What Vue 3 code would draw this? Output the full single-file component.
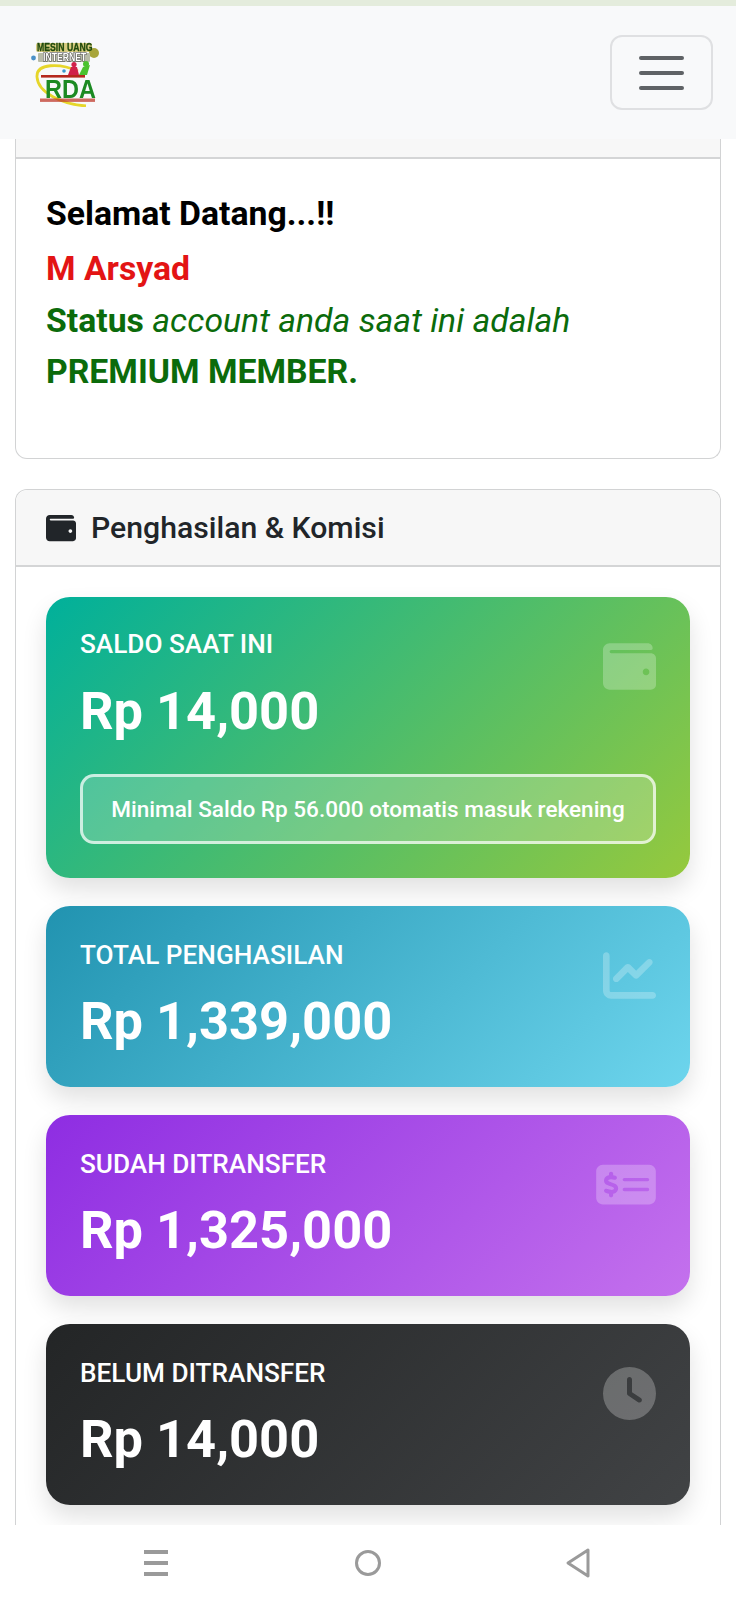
<script setup>
const stats = [
  { key: 'green', label: 'SALDO SAAT INI', value: 'Rp 14,000', icon: 'wallet', note: 'Minimal Saldo Rp 56.000 otomatis masuk rekening' },
  { key: 'blue', label: 'TOTAL PENGHASILAN', value: 'Rp 1,339,000', icon: 'chart' },
  { key: 'purple', label: 'SUDAH DITRANSFER', value: 'Rp 1,325,000', icon: 'money' },
  { key: 'dark', label: 'BELUM DITRANSFER', value: 'Rp 14,000', icon: 'clock' }
]
const wallet = 'M461.2 128H80c-8.84 0-16-7.16-16-16s7.16-16 16-16h384c8.84 0 16-7.16 16-16 0-26.51-21.49-48-48-48H64C28.65 32 0 60.65 0 96v320c0 35.35 28.65 64 64 64h397.2c28.02 0 50.8-21.53 50.8-48V176c0-26.47-22.78-48-50.8-48zM416 340c-17.67 0-32-14.33-32-32s14.33-32 32-32 32 14.33 32 32-14.33 32-32 32z'
const icons = {
  wallet: { box: '0 0 512 512', w: 53, d: wallet },
  chart: { box: '0 0 512 512', w: 53, d: 'M64 64c0-17.7-14.3-32-32-32S0 46.3 0 64V400c0 44.2 35.8 80 80 80H480c17.7 0 32-14.3 32-32s-14.3-32-32-32H80c-8.8 0-16-7.2-16-16V64zm406.6 86.6c12.5-12.5 12.5-32.8 0-45.3s-32.8-12.5-45.3 0L320 210.7l-57.4-57.4c-12.5-12.5-32.8-12.5-45.3 0l-112 112c-12.5 12.5-12.5 32.8 0 45.3s32.8 12.5 45.3 0L240 221.3l57.4 57.4c12.5 12.5 32.8 12.5 45.3 0l128-128z' },
  money: { box: '0 0 576 512', w: 60, d: 'M64 64C28.7 64 0 92.7 0 128V384c0 35.3 28.7 64 64 64H512c35.3 0 64-28.7 64-64V128c0-35.3-28.7-64-64-64H64zM272 192H496c8.8 0 16 7.2 16 16s-7.2 16-16 16H272c-8.8 0-16-7.2-16-16s7.2-16 16-16zM256 304c0-8.8 7.2-16 16-16H496c8.8 0 16 7.2 16 16s-7.2 16-16 16H272c-8.8 0-16-7.2-16-16zM164 152v13.9c7.5 1.2 14.6 2.9 21.1 4.7c10.7 2.8 17 13.8 14.2 24.5s-13.8 17-24.5 14.2c-11-2.9-21.6-5-31.2-5.2c-7.9-.1-16 1.8-21.5 5c-4.8 2.8-6.2 5.6-6.2 9.3c0 1.8 .1 3.5 5.3 6.7c6.3 3.8 15.5 6.7 28.3 10.5l.7 .2c11.2 3.4 25.6 7.7 37.1 15c12.9 8.1 24.3 21.3 24.6 41.6c.3 20.9-10.5 36.1-24.8 45c-7.2 4.5-15.2 7.3-23.2 9V360c0 11-9 20-20 20s-20-9-20-20V345.4c-10.3-2.2-20-5.5-28.2-8.4c-2.1-.7-4.1-1.4-6.1-2.1c-10.5-3.5-16.1-14.8-12.6-25.3s14.8-16.1 25.3-12.6c2.5 .8 4.9 1.7 7.2 2.4c13.6 4.6 24 8.1 35.1 8.5c8.6 .3 16.5-1.6 21.4-4.7c4.1-2.5 6-5.5 5.9-10.5c0-2.9-.8-5-5.9-8.2c-6.3-4-15.4-6.9-28-10.7l-1.7-.5c-10.9-3.3-24.6-7.4-35.6-14c-12.7-7.7-24.6-20.5-24.7-40.7c-.1-21.1 11.8-35.7 25.8-43.9c6.9-4.1 14.5-6.8 22.2-8.5V152c0-11 9-20 20-20s20 9 20 20z' },
  clock: { box: '0 0 512 512', w: 53, d: 'M256 0a256 256 0 1 1 0 512A256 256 0 1 1 256 0zM232 120V256c0 8 4 15.5 10.7 20l96 64c11 7.4 25.9 4.4 33.3-6.7s4.4-25.9-6.7-33.3L280 243.2V120c0-13.3-10.7-24-24-24s-24 10.7-24 24z' }
}
</script>

<template>
  <div class="page">
    <div class="strip"></div>
    <nav class="navbar">
      <svg class="logo" viewBox="30 38 70 68" width="70" height="68" aria-label="Logo RDA">
        <rect x="36" y="42" width="56" height="9" rx="2" fill="#c9b84a" opacity=".7" />
        <circle cx="94" cy="52" r="5" fill="#a8a53a" />
        <circle cx="33.5" cy="57" r="2.4" fill="#4a90c8" />
        <rect x="38" y="52" width="52" height="9" rx="1" fill="#b8bca8" />
        <text transform="translate(37 49.8) scale(1 1.2)" class="t1">MESIN UANG</text>
        <text transform="translate(43 60.2) scale(1 1.2)" class="t2">INTERNET</text>
        <path d="M78 70 C60 62 36 62 37 76 C38 92 62 103 86 105" fill="none" stroke="#e6d62a" stroke-width="2.8" />
        <circle cx="64" cy="70" r="1.8" fill="#3a9ad0" />
        <path d="M68 74 L71 66 L77 66 L79 74Z" fill="#d0214a" />
        <circle cx="74" cy="63.5" r="2.6" fill="#d0214a" />
        <path d="M79 74 L83 66 L90 64 L87 74Z" fill="#4bc22f" />
        <circle cx="86" cy="63" r="3" fill="#4bc22f" />
        <rect x="41" y="74" width="44" height="2.6" fill="#b5281e" />
        <text transform="translate(45 97) scale(1 1.1)" class="t3">RDA</text>
        <rect x="40" y="97.5" width="55" height="3.4" fill="#c0392b" opacity=".75" />
      </svg>
      <button class="toggler" aria-label="Menu"><span></span><span></span><span></span></button>
    </nav>

    <main class="content">
      <section class="card welcome">
        <div class="card-head stub"></div>
        <div class="welcome-body">
          <p class="hello">Selamat Datang...!!</p>
          <p class="name">M Arsyad</p>
          <p class="status"><b>Status</b> <i>account anda saat ini adalah</i></p>
          <p class="status"><b>PREMIUM MEMBER.</b></p>
        </div>
      </section>

      <section class="card earn">
        <div class="card-head title">
          <svg viewBox="0 0 512 512" width="30" height="30"><path :d="wallet" fill="#212529" /></svg>
          <span>Penghasilan &amp; Komisi</span>
        </div>
        <div class="earn-body">
          <article v-for="s in stats" :key="s.key" class="stat" :class="s.key">
            <svg class="stat-icon" :viewBox="icons[s.icon].box" :width="icons[s.icon].w" height="53"><path :d="icons[s.icon].d" fill="currentColor" fill-rule="evenodd" /></svg>
            <div class="label">{{ s.label }}</div>
            <div class="value">{{ s.value }}</div>
            <div v-if="s.note" class="note">{{ s.note }}</div>
          </article>
        </div>
      </section>
    </main>

    <footer class="sysbar">
      <svg width="26" height="30" viewBox="0 0 26 30"><path d="M1 2h24v4H1zM1 13h24v4H1zM1 24h24v4H1z" fill="#9a9a9a" /></svg>
      <svg width="30" height="30" viewBox="0 0 30 30"><circle cx="15" cy="15" r="11.5" fill="none" stroke="#9a9a9a" stroke-width="3" /></svg>
      <svg width="26" height="32" viewBox="0 0 26 32"><path d="M23 3 L3 16 L23 29Z" fill="none" stroke="#9a9a9a" stroke-width="3" stroke-linejoin="round" /></svg>
    </footer>
  </div>
</template>

<style>
html, body { margin: 0; background: #fff; }
</style>

<style scoped>
.page { width: 736px; height: 1600px; display: flex; flex-direction: column; overflow: hidden; font-family: Roboto, "Liberation Sans", sans-serif; background: #fff; color: #212529; }
.strip { height: 6px; background: #e4ecdc; flex: none; }
.navbar { height: 133px; flex: none; background: #f8f9fa; display: flex; align-items: center; justify-content: space-between; padding: 0 23px 0 30px; box-sizing: border-box; }
.logo { filter: blur(.3px); }
.t1 { font: 700 8.7px "Liberation Sans", sans-serif; fill: #1f4a0c; stroke: #1f4a0c; stroke-width: .25px; }
.t2 { font: 700 8.7px "Liberation Sans", sans-serif; fill: #fff; stroke: #3a3a3a; stroke-width: .9px; paint-order: stroke; }
.t3 { font: 700 23.5px "Liberation Sans", sans-serif; fill: #1c8a22; }
.toggler { width: 103px; height: 75px; box-sizing: border-box; background: transparent; border: 2px solid #dfe0e2; border-radius: 12px; display: flex; flex-direction: column; align-items: center; justify-content: center; gap: 11px; padding: 0; }
.toggler span { display: block; width: 45px; height: 4px; border-radius: 2px; background: #5f6265; }
.content { flex: 1; min-height: 0; overflow: hidden; padding: 0 15px; }
.card { border: 1px solid #d2d3d4; background: #fff; box-sizing: border-box; }
.welcome { height: 320px; border-top: 0; border-radius: 0 0 12px 12px; margin-bottom: 30px; }
.card-head { background: #f7f7f7; border-bottom: 2px solid #d4d5d6; box-sizing: border-box; }
.stub { height: 20px; }
.welcome-body { padding: 29px 30px 0; }
.welcome-body p { margin: 0; font-size: 33.75px; line-height: 51.3px; }
.hello { font-weight: 700; color: #000; margin-bottom: 4px !important; }
.name { font-weight: 700; color: #e31414; }
.status { color: #0b6b0b; }
.status b { font-weight: 700; }
.earn { border-radius: 12px 12px 0 0; border-bottom: 0; height: 1100px; }
.title { height: 77px; border-radius: 12px 12px 0 0; display: flex; align-items: center; gap: 15px; padding: 0 30px; font-size: 30.2px; font-weight: 500; }
.earn-body { padding: 30px 30px 0; display: flex; flex-direction: column; gap: 28px; }
.stat { position: relative; border-radius: 24px; padding: 33px 34px 34px; box-shadow: 0 12px 24px rgba(0,0,0,.12); color: #fff; }
.label { font-size: 26.2px; line-height: 32px; font-weight: 500; }
.value { font-size: 52.4px; line-height: 64px; font-weight: 700; margin-top: 18px; }
.stat-icon { position: absolute; top: 43px; right: 34px; color: rgba(255,255,255,.25); }
.note { margin-top: 31px; height: 70px; box-sizing: border-box; border: 3px solid rgba(255,255,255,.7); border-radius: 14px; background: rgba(255,255,255,.2); display: flex; align-items: center; justify-content: center; font-size: 22.55px; font-weight: 500; white-space: nowrap; }
.green { background: linear-gradient(135deg, #00b09b, #96c93d); padding-top: 31px; padding-bottom: 34px; }
.green .value { margin-top: 19px; }
.blue { background: linear-gradient(135deg, #2193b0, #6dd5ed); }
.purple { background: linear-gradient(135deg, #8e2de2, #c471ed); }
.dark { background: linear-gradient(135deg, #232526, #414345); }
.sysbar { height: 75px; flex: none; background: #fff; display: flex; align-items: center; padding-left: 143px; box-sizing: border-box; }
.sysbar svg:nth-child(2) { margin-left: 184px; }
.sysbar svg:nth-child(3) { margin-left: 182px; }
</style>
